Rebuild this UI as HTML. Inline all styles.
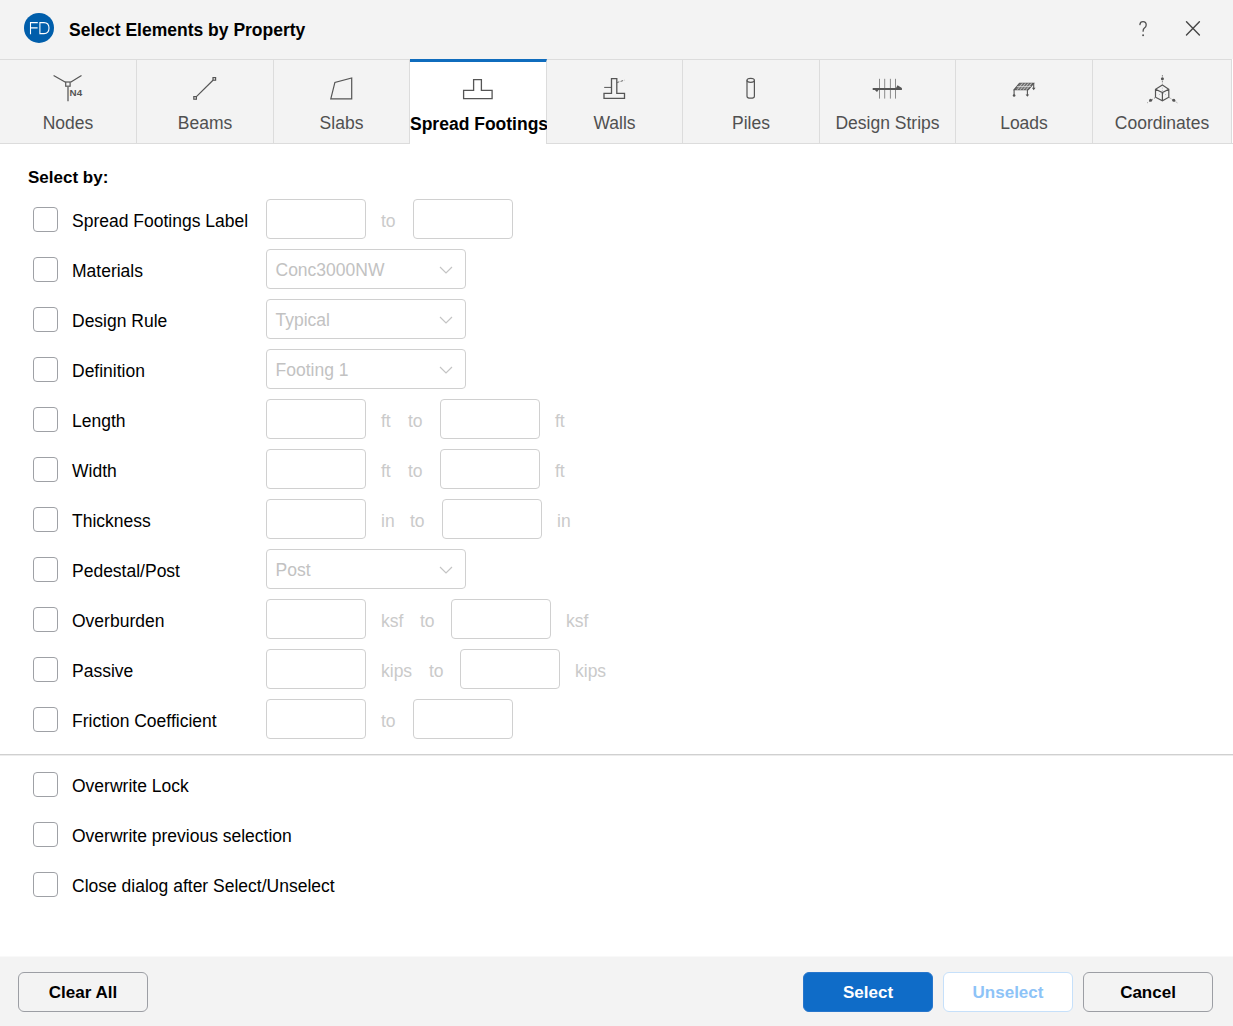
<!DOCTYPE html>
<html><head><meta charset="utf-8">
<style>
*{box-sizing:border-box;margin:0;padding:0}
html,body{width:1233px;height:1026px;overflow:hidden;background:#fff;font-family:"Liberation Sans",sans-serif;color:#000}
.abs{position:absolute}
#title{position:absolute;left:0;top:0;width:1233px;height:59px;background:#f3f3f3}
#logo{position:absolute;left:24px;top:13px;width:30px;height:30px;border-radius:50%;background:#0f63b3;color:#fff;font-size:16px;line-height:30px;text-align:center;letter-spacing:-0.5px}
#ttl{position:absolute;left:69px;top:20px;font-size:17.5px;line-height:20px;font-weight:bold;white-space:nowrap}
#tabs{position:absolute;left:0;top:59px;width:1233px;height:85px;background:#fff}
.tab{position:absolute;top:0;height:85px;background:#f3f3f3;border-top:1px solid #dcdcdc;border-bottom:1px solid #dcdcdc;border-right:1px solid #dcdcdc}
.tab.act{background:#fff;border-top:3px solid #0f6cbd;border-bottom:none}
.tl{position:absolute;left:0;right:0;top:53px;text-align:center;font-size:17.5px;line-height:20px;color:#505050;white-space:nowrap}
.tab.act .tl{color:#000;font-weight:bold;}
.lbl{position:absolute;font-size:17.5px;line-height:20px;white-space:nowrap;color:#000}
.cb{position:absolute;left:33px;width:25px;height:25px;border:1px solid #9fa1a6;border-radius:4px;background:#fff}
.inp{position:absolute;width:100px;height:40px;border:1px solid #d0d0d0;border-radius:4px;background:#fff}
.sel{position:absolute;left:266px;width:200px;height:40px;border:1px solid #d0d0d0;border-radius:4px;background:#fff}
.sel span{position:absolute;left:8.5px;top:10px;font-size:17.5px;line-height:20px;color:#c2c2c2;white-space:nowrap}
.sel svg{position:absolute;left:172px;top:16px}
.u{position:absolute;font-size:17.5px;line-height:20px;color:#cacaca;white-space:nowrap}
#sep{position:absolute;left:0;top:754px;width:1233px;height:2px;background:#d0d0d0;border-bottom:1px solid #ececec}
#foot{position:absolute;left:0;top:956px;width:1233px;height:70px;background:#f3f3f3;border-top:1px solid #f9f9f9}
.btn{position:absolute;top:972px;width:130px;height:40px;border-radius:6px;font-size:17px;font-weight:bold;text-align:center;line-height:40px}
</style></head><body>
<div id="title">
  <svg style="position:absolute;left:0;top:0" width="60" height="59" viewBox="0 0 60 59"><circle cx="39" cy="27.9" r="15" fill="#005eab"/><path d="M37.8 22.6 H30.5 V34.2 M30.5 27.9 H37.6 M39.9 22.6 V33.6 H44 Q49 33.6 49 28.1 Q49 22.6 44 22.6 Z" fill="none" stroke="#fff" stroke-width="1.1"/></svg>
  <svg style="position:absolute;left:1120px;top:0" width="113" height="59" viewBox="1120 0 113 59"><g fill="none" stroke="#505050" stroke-width="1.3" stroke-linecap="round"><path d="M1139.9 24.6 C1140.1 22.6 1141.4 21.7 1143 21.7 C1145 21.7 1146.2 23 1146.2 24.9 C1146.2 26.5 1145.3 27.5 1144.2 28.3 C1143.4 28.9 1143.1 29.8 1143.1 31.2"/><path d="M1186.5 21.7 L1199.4 35.1 M1199.4 21.7 L1186.5 35.1" stroke="#474747" stroke-width="1.4"/></g><circle cx="1143.1" cy="35.2" r="0.95" fill="#505050"/></svg>
<div id="ttl">Select Elements by Property</div>
</div>
<div id="tabs">
  <div class="tab" style="left:0;width:137px"><div class="tl">Nodes</div></div>
  <div class="tab" style="left:137px;width:137px"><div class="tl">Beams</div></div>
  <div class="tab" style="left:274px;width:136px"><div class="tl">Slabs</div></div>
  <div class="tab act" style="left:410px;width:137px"><div class="tl" style="top:52px;font-size:17.5px">Spread Footings</div></div>
  <div class="tab" style="left:547px;width:136px"><div class="tl">Walls</div></div>
  <div class="tab" style="left:683px;width:137px"><div class="tl">Piles</div></div>
  <div class="tab" style="left:820px;width:136px"><div class="tl">Design Strips</div></div>
  <div class="tab" style="left:956px;width:137px"><div class="tl">Loads</div></div>
  <div class="tab" style="left:1093px;width:139px"><div class="tl">Coordinates</div></div>
</div>

<svg id="icons" width="1233" height="144" viewBox="0 0 1233 144" style="position:absolute;left:0;top:0;pointer-events:none">
<g fill="none" stroke="#555" stroke-width="1.2">
<!-- Nodes -->
<path d="M53.6 75.4 L65.5 82.2 M70.5 82.2 L81.5 75.4"/>
<rect x="65.7" y="82" width="4.4" height="4.2"/>
<path d="M68 86.8 V101.2" stroke="#666" stroke-width="1.4"/>
<!-- Beams -->
<rect x="193.8" y="96.6" width="2.6" height="2.6"/>
<rect x="213" y="77.6" width="2.6" height="2.6"/>
<path d="M196.4 96.6 L213 80.2"/>
<!-- Slabs -->
<path d="M330.8 98.9 L334.9 82.4 L351.7 78 L351.7 98.9 Z"/>
<!-- Spread Footings -->
<path d="M463.6 90.4 H473.6 V79.7 H481.4 V90.4 H492.1 V98.7 H463.6 Z" stroke-width="1.3"/>
<!-- Walls -->
<path d="M604 93.3 H611.5 V78.7 H616.8 V93.3 H624.5 V98.4 H604 Z" stroke-width="1.3"/>
<path d="M604.2 87.4 H611.5" stroke-width="1"/><path d="M616.8 82.6 L624.7 80.1" stroke-width="1" stroke-dasharray="2.6 1.4" stroke="#666"/>
<!-- Piles -->
<ellipse cx="750.7" cy="80.3" rx="3.7" ry="2"/>
<path d="M747 80.3 V96.2 A3.7 2 0 0 0 754.4 96.2 V80.3"/>
<!-- Design strips -->
<path d="M879.5 78.8 V98.6 M884.7 78.8 V98.6 M890.4 78.8 V98.6 M895.5 78.8 V98.6" stroke="#8a8a8a" stroke-width="1"/>
</g>
<g fill="#555" stroke="none">
<text x="69.6" y="96.2" font-family="Liberation Sans" font-weight="bold" font-size="9.8">N4</text>
<path d="M872.7 88 H901.9 L897.5 85.2 L896 88 Z M872.7 90 H901.9 V88 H872.7 Z M872.7 88 L877 92 L878.5 90 Z"/>
</g>
<!-- Loads -->
<g fill="none" stroke="#555" stroke-width="1.1">
<path d="M1019.5 83.2 H1033.7 L1028.3 89.8 H1014.1 Z" fill="#777"/>
<path d="M1014.1 89.8 V95.5 M1027.4 89.8 V95.5 M1033.7 83.2 V88.9"/>
</g>
<g fill="#555">
<circle cx="1014.1" cy="95.5" r="1.3"/>
<path d="M1025.6 94.4 L1029.2 94.4 L1027.4 96.8 Z M1031.9 87.8 L1035.5 87.8 L1033.7 90.2 Z"/>
</g>
<g stroke="#f3f3f3" stroke-width="0.6">
<path d="M1022.5 83.2 L1017.2 89.8 M1025.5 83.2 L1020.2 89.8 M1028.5 83.2 L1023.2 89.8 M1031.5 83.2 L1026.2 89.8 M1016.8 86.5 H1031"/>
</g>
<!-- Coordinates -->
<g fill="none" stroke="#555" stroke-width="1.2">
<path d="M1162.4 85 L1168.8 89.3 V97.2 L1162.4 100.7 L1155.5 97.2 V89.3 Z M1155.5 89.3 L1162.4 92.6 L1168.8 89.3 M1162.4 92.6 V100.7"/>
<path d="M1162.4 75 V84.5 M1155.3 97.5 L1147.3 102.8 M1169.2 97.5 L1177.3 102.8" stroke="#8a8a8a" stroke-width="1" stroke-dasharray="1.6 1.3"/><path d="M1162.4 87.5 V92 M1162 93 L1158 95.5 M1163 93 L1167 95.5" stroke="#b0b4bb" stroke-width="0.8" stroke-dasharray="1.2 1.2"/>
</g>
<g fill="#555">
<circle cx="1162.4" cy="78.8" r="1.5"/><circle cx="1150.6" cy="100.3" r="1.5"/><circle cx="1173.8" cy="100.3" r="1.5"/>
</g>
</svg>
<div class="lbl" style="left:28px;top:168px;font-weight:bold;font-size:17px">Select by:</div>

<div id="rows">
<div class="cb" style="top:207px"></div>
<div class="lbl" style="left:72px;top:211px">Spread Footings Label</div>
<div class="inp" style="left:266px;top:199px"></div>
<div class="u" style="left:381px;top:211px">to</div>
<div class="inp" style="left:413px;top:199px"></div>
<div class="cb" style="top:257px"></div>
<div class="lbl" style="left:72px;top:261px">Materials</div>
<div class="sel" style="top:249px"><span>Conc3000NW</span><svg width="14" height="8" viewBox="0 0 14 8"><path d="M1 1 L7 7 L13 1" fill="none" stroke="#c4c4c4" stroke-width="1.2"/></svg></div>
<div class="cb" style="top:307px"></div>
<div class="lbl" style="left:72px;top:311px">Design Rule</div>
<div class="sel" style="top:299px"><span>Typical</span><svg width="14" height="8" viewBox="0 0 14 8"><path d="M1 1 L7 7 L13 1" fill="none" stroke="#c4c4c4" stroke-width="1.2"/></svg></div>
<div class="cb" style="top:357px"></div>
<div class="lbl" style="left:72px;top:361px">Definition</div>
<div class="sel" style="top:349px"><span>Footing 1</span><svg width="14" height="8" viewBox="0 0 14 8"><path d="M1 1 L7 7 L13 1" fill="none" stroke="#c4c4c4" stroke-width="1.2"/></svg></div>
<div class="cb" style="top:407px"></div>
<div class="lbl" style="left:72px;top:411px">Length</div>
<div class="inp" style="left:266px;top:399px"></div>
<div class="u" style="left:381px;top:411px">ft</div>
<div class="u" style="left:408px;top:411px">to</div>
<div class="inp" style="left:440px;top:399px"></div>
<div class="u" style="left:555px;top:411px">ft</div>
<div class="cb" style="top:457px"></div>
<div class="lbl" style="left:72px;top:461px">Width</div>
<div class="inp" style="left:266px;top:449px"></div>
<div class="u" style="left:381px;top:461px">ft</div>
<div class="u" style="left:408px;top:461px">to</div>
<div class="inp" style="left:440px;top:449px"></div>
<div class="u" style="left:555px;top:461px">ft</div>
<div class="cb" style="top:507px"></div>
<div class="lbl" style="left:72px;top:511px">Thickness</div>
<div class="inp" style="left:266px;top:499px"></div>
<div class="u" style="left:381px;top:511px">in</div>
<div class="u" style="left:410px;top:511px">to</div>
<div class="inp" style="left:442px;top:499px"></div>
<div class="u" style="left:557px;top:511px">in</div>
<div class="cb" style="top:557px"></div>
<div class="lbl" style="left:72px;top:561px">Pedestal/Post</div>
<div class="sel" style="top:549px"><span>Post</span><svg width="14" height="8" viewBox="0 0 14 8"><path d="M1 1 L7 7 L13 1" fill="none" stroke="#c4c4c4" stroke-width="1.2"/></svg></div>
<div class="cb" style="top:607px"></div>
<div class="lbl" style="left:72px;top:611px">Overburden</div>
<div class="inp" style="left:266px;top:599px"></div>
<div class="u" style="left:381px;top:611px">ksf</div>
<div class="u" style="left:420px;top:611px">to</div>
<div class="inp" style="left:451px;top:599px"></div>
<div class="u" style="left:566px;top:611px">ksf</div>
<div class="cb" style="top:657px"></div>
<div class="lbl" style="left:72px;top:661px">Passive</div>
<div class="inp" style="left:266px;top:649px"></div>
<div class="u" style="left:381px;top:661px">kips</div>
<div class="u" style="left:429px;top:661px">to</div>
<div class="inp" style="left:460px;top:649px"></div>
<div class="u" style="left:575px;top:661px">kips</div>
<div class="cb" style="top:707px"></div>
<div class="lbl" style="left:72px;top:711px">Friction Coefficient</div>
<div class="inp" style="left:266px;top:699px"></div>
<div class="u" style="left:381px;top:711px">to</div>
<div class="inp" style="left:413px;top:699px"></div>
<div class="cb" style="top:772px"></div>
<div class="lbl" style="left:72px;top:776px">Overwrite Lock</div>
<div class="cb" style="top:822px"></div>
<div class="lbl" style="left:72px;top:826px">Overwrite previous selection</div>
<div class="cb" style="top:872px"></div>
<div class="lbl" style="left:72px;top:876px">Close dialog after Select/Unselect</div>
</div>

<div id="sep"></div>
<div style="position:absolute;left:1231px;top:143px;width:2px;height:1px;background:#dcdcdc"></div>

<div id="foot"></div>
<div class="btn" style="left:18px;border:1px solid #9c9ea4;background:#f3f3f3;color:#000">Clear All</div>
<div class="btn" style="left:803px;background:#0f6cc8;border:1px solid #2776cc;color:#fff">Select</div>
<div class="btn" style="left:943px;background:#fff;border:1px solid #c6e0fa;color:#8dc3f7">Unselect</div>
<div class="btn" style="left:1083px;border:1px solid #9c9ea4;background:#f3f3f3;color:#000">Cancel</div>
</body></html>
